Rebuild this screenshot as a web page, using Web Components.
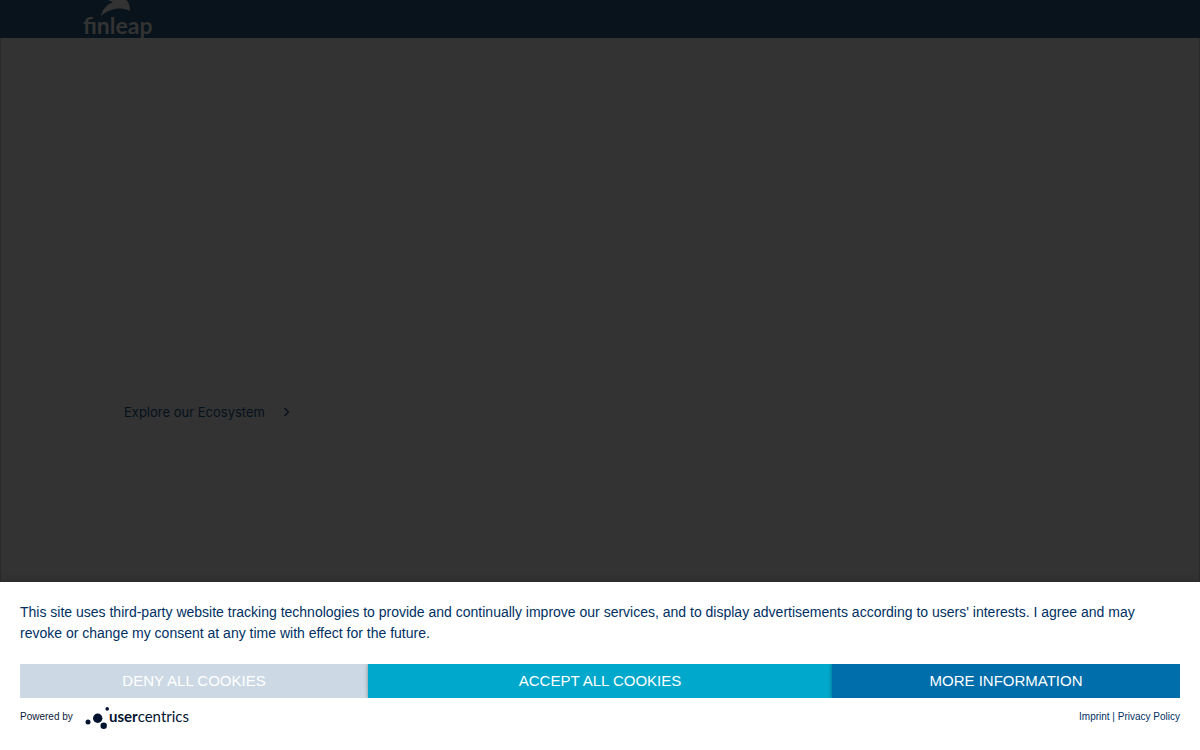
<!DOCTYPE html>
<html lang="en">
<head>
<meta charset="utf-8">
<meta name="viewport" content="width=device-width, initial-scale=1">
<title>finleap</title>
<style>
body { margin: 0; background: #333; font-family: "Liberation Sans", Arial, sans-serif; }
</style>
</head>
<body>
<fl-page>
  <fl-header slot="header"></fl-header>
  <fl-hero href="#ecosystem">Explore our Ecosystem</fl-hero>
  <uc-banner slot="banner">
    This site uses third-party website tracking technologies to provide and continually improve our services, and to display advertisements according to users' interests. I agree and may revoke or change my consent at any time with effect for the future.
    <uc-button slot="actions" kind="deny">Deny all cookies</uc-button>
    <uc-button slot="actions" kind="accept">Accept all cookies</uc-button>
    <uc-button slot="actions" kind="more">More information</uc-button>
    <uc-footer slot="footer"></uc-footer>
  </uc-banner>
</fl-page>
<script>
class Base extends HTMLElement {
  constructor() {
    super();
    this.attachShadow({ mode: "open" }).innerHTML = this.constructor.markup;
  }
}

class FlPage extends Base {
  static markup = `
    <style>
      :host { display: flex; flex-direction: column; min-height: 100vh; background: #333; }
      main { flex: 1; box-sizing: border-box; border: 1px solid #2b2b2b; border-width: 0 1px; }
    </style>
    <slot name="header"></slot>
    <main><slot></slot></main>
    <slot name="banner"></slot>`;
}

class FlHeader extends Base {
  static markup = `
    <style>
      :host { display: block; height: 38px; padding: 0 80px; background: #08131c; }
      a { display: block; width: 76px; height: 44px; }
      svg { display: block; overflow: visible; }
      text { font: 700 23px Lato, sans-serif; fill: #333; }
    </style>
    <a href="#home" aria-label="finleap">
      <svg width="76" height="44" viewBox="0 0 76 44">
        <path d="M28 0 H46 C49 2 50 6 50 11 C43 7 31 7 21 16 C22 10 26 5 33 2 C31 1 29 1 28 0Z" fill="#333"/>
        <text x="3" y="34">finleap</text>
      </svg>
    </a>`;
}

class FlHero extends Base {
  static markup = `
    <style>
      :host { display: block; padding: 364px 120px 0 123px; }
      a { display: inline-flex; align-items: center; gap: 18px; color: #06111b; text-decoration: none;
          font: 400 13px/20px Inter, sans-serif; }
      svg { display: block; }
    </style>
    <a><slot></slot>
      <svg width="7" height="10" viewBox="0 0 7 10" fill="none" stroke="currentColor" stroke-width="1.3"><path d="M1.5 1 L5.5 5 L1.5 9"/></svg>
    </a>`;
  connectedCallback() {
    this.shadowRoot.querySelector("a").href = this.getAttribute("href");
  }
}

class UcBanner extends Base {
  static markup = `
    <style>
      :host { display: block; padding: 20px 20px 14px; background: #fff; color: #003063;
              box-shadow: 0 0 8px rgba(0,0,0,.3); }
      p { margin: 0 0 20px; font-size: 14px; line-height: 21px; }
      .actions { display: grid; grid-template-columns: 3fr 4fr 3fr; overflow: hidden; }
    </style>
    <p><slot></slot></p>
    <div class="actions"><slot name="actions"></slot></div>
    <slot name="footer"></slot>`;
}

class UcButton extends Base {
  static markup = `
    <style>
      :host { display: block; box-shadow: 0 0 4px rgba(0,0,0,.4); }
      :host([kind=deny]) { background: #ccd9e4; }
      :host([kind=accept]) { background: #00a8cc; }
      :host([kind=more]) { background: #006eab; }
      button { display: block; width: 100%; height: 34px; padding: 0; border: 0; background: none;
               color: #fff; font: 15px/34px "Liberation Sans", Arial, sans-serif; text-transform: uppercase; cursor: pointer; }
    </style>
    <button type="button"><slot></slot></button>`;
}

class UcFooter extends Base {
  static markup = `
    <style>
      :host { display: flex; justify-content: space-between; align-items: center; height: 38px;
              font-size: 10px; line-height: 12px; }
      .powered { display: flex; align-items: center; gap: 12px; color: #0a1a3a; }
      a { color: inherit; text-decoration: none; }
      svg { display: block; }
      text { font: 400 15px Lato, sans-serif; }
      .bold { font-weight: 700; }
    </style>
    <div class="powered"><span>Powered by</span>
      <a href="#usercentrics" aria-label="usercentrics">
        <svg width="108" height="24" viewBox="0 0 108 24" fill="#04142f">
          <circle cx="3" cy="17" r="2.5"/><circle cx="12.7" cy="13.2" r="4.7"/>
          <circle cx="18.7" cy="20.8" r="3.2"/><circle cx="22.2" cy="3.9" r="1.8"/>
          <text x="24" y="17"><tspan class="bold">user</tspan>centrics</text>
        </svg>
      </a>
    </div>
    <nav><a href="#imprint">Imprint</a> | <a href="#privacy">Privacy Policy</a></nav>`;
}

customElements.define("fl-page", FlPage);
customElements.define("fl-header", FlHeader);
customElements.define("fl-hero", FlHero);
customElements.define("uc-banner", UcBanner);
customElements.define("uc-button", UcButton);
customElements.define("uc-footer", UcFooter);
</script>
</body>
</html>
